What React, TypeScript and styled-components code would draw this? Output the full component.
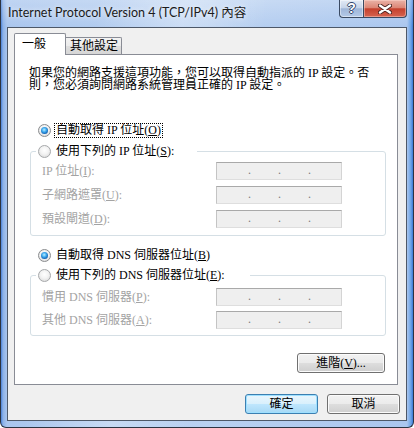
import React from 'react';
import styled, { createGlobalStyle, css } from 'styled-components';

const BODY_FONT = `"Liberation Serif", "Noto Sans CJK TC", serif`;

const GlobalStyle = createGlobalStyle`
  html, body { margin: 0; padding: 0; background: #ffffff; }
  #root { width: 414px; height: 428px; }
`;

const Window = styled.div`
  box-sizing: border-box;
  width: 414px;
  height: 428px;
  display: flex;
  flex-direction: column;
  padding: 0 6px 6px 6px;
  border: 1px solid #2c3442;
  border-top: none;
  border-radius: 0 0 6px 6px;
  background:
    linear-gradient(100deg, rgba(255,255,255,0) 20%, rgba(255,255,255,0.28) 38%, rgba(255,255,255,0) 55%),
    linear-gradient(180deg, rgba(255,255,255,0.25) 0px, rgba(255,255,255,0) 27px),
    linear-gradient(90deg, #4a82d8 0, #8db2e8 2px, #aac6ee 6px, #b9d1f1 50%, #aac6ee calc(100% - 6px), #6aa2e6 calc(100% - 2px), #3b78d6 100%);
`;

const TitleBar = styled.div`
  flex: none;
  height: 27px;
  display: flex;
  align-items: flex-start;
  justify-content: space-between;
`;

const Title = styled.div`
  margin: 5px 0 0 1px;
  font-family: Lato, "Noto Sans CJK TC", sans-serif;
  font-size: 12.5px;
  line-height: 16px;
  color: #1b1b1b;
  white-space: nowrap;
  text-shadow: 0 0 5px rgba(255, 255, 255, 0.9);
`;

const CaptionButtons = styled.div`
  display: flex;
`;

const CaptionButton = styled.div`
  box-sizing: border-box;
  height: 18px;
  display: flex;
  align-items: center;
  justify-content: center;
  border: 1px solid #3a4a62;
  border-top: none;
`;

const HelpButton = styled(CaptionButton)`
  width: 24px;
  border-right: none;
  border-radius: 0 0 0 4px;
  background: linear-gradient(180deg, #e2eaf5 0%, #c7d5ea 45%, #9fb6d8 52%, #b4c9e8 100%);
  box-shadow: inset 0 0 0 1px rgba(255, 255, 255, 0.45);
`;

const CloseButton = styled(CaptionButton)`
  width: 44px;
  border-radius: 0 0 4px 0;
  background: linear-gradient(180deg, #eab3a8 0%, #dc8676 45%, #c5402d 52%, #d66450 100%);
  box-shadow: inset 0 0 0 1px rgba(255, 220, 210, 0.45);
`;

const HelpGlyph = styled.span`
  font-family: "Liberation Sans", sans-serif;
  font-weight: bold;
  font-size: 14px;
  line-height: 14px;
  color: #ffffff;
  text-shadow: 1px 0 0 #34476a, -1px 0 0 #34476a, 0 1px 0 #34476a, 0 -1px 0 #34476a;
  margin-top: -1px;
`;

const Client = styled.div`
  flex: 1;
  min-height: 0;
  display: flex;
  flex-direction: column;
  border: 1px solid #4d5868;
  background: #f0f0f0;
`;

const TabStrip = styled.div`
  flex: none;
  display: flex;
  align-items: flex-end;
  padding: 5px 0 0 6px;
`;

const Tab = styled.div<{ $active?: boolean }>`
  box-sizing: border-box;
  font-family: ${BODY_FONT};
  font-size: 12px;
  line-height: 12px;
  color: #000;
  white-space: nowrap;
  border: 1px solid #898c95;
  border-bottom: none;
  ${(p) =>
    p.$active
      ? css`
          position: relative;
          z-index: 1;
          width: 52px;
          height: 22px;
          margin-bottom: -1px;
          padding: 4px 0 0 7px;
          background: #ffffff;
          border-radius: 2px 2px 0 0;
        `
      : css`
          width: 56px;
          height: 17px;
          padding: 2px 0 0 4px;
          border-left: none;
          background: linear-gradient(180deg, #f3f3f3 0%, #ebebeb 50%, #dedede 52%, #d6d6d6 100%);
          border-radius: 0 2px 0 0;
        `}
`;

const Panel = styled.div`
  flex: 1;
  min-height: 0;
  display: flex;
  flex-direction: column;
  margin: 0 8px 0 6px;
  padding: 12px 0 11px 0;
  border: 1px solid #898c95;
  background: #ffffff;
  font-family: ${BODY_FONT};
  font-size: 12px;
  color: #000;
`;

const Description = styled.p`
  margin: 0 0 0 14px;
  line-height: 12px;
  white-space: nowrap;
`;

const RadioRow = styled.div<{ $top?: number; $indent?: number }>`
  display: flex;
  align-items: center;
  height: 15px;
  margin-top: ${(p) => p.$top ?? 0}px;
  padding-left: ${(p) => p.$indent ?? 23}px;
`;

const RadioDot = styled.span<{ $checked?: boolean }>`
  box-sizing: border-box;
  flex: none;
  width: 13px;
  height: 13px;
  border-radius: 50%;
  border: 1px solid ${(p) => (p.$checked ? '#8a8c8e' : '#a6a8aa')};
  background: radial-gradient(circle at 50% 40%, #ffffff 0%, #f3f3f3 45%, #d4d4d4 100%);
  display: flex;
  align-items: center;
  justify-content: center;
  ${(p) =>
    p.$checked &&
    css`
      &::after {
        content: '';
        width: 7px;
        height: 7px;
        border-radius: 50%;
        background: radial-gradient(circle at 45% 40%, #bdefff 0%, #45b0f2 35%, #1266b8 70%, #0b3f7a 100%);
      }
    `}
`;

const RadioLabel = styled.span<{ $focused?: boolean }>`
  margin-left: 3px;
  padding: 0 1px;
  border: 1px dotted ${(p) => (p.$focused ? '#000' : 'transparent')};
  line-height: 13px;
  white-space: nowrap;
`;

const Group = styled.fieldset<{ $top?: number }>`
  margin: ${(p) => p.$top ?? 0}px 11px 0 15px;
  padding: 0 0 ${(p) => (p.$top && p.$top < 6 ? 6 : 7)}px 5px;
  min-width: 0;
  border: 1px solid #d5dfe5;
  border-radius: 3px;
`;

const GroupLegend = styled.legend<{ $width: number }>`
  box-sizing: border-box;
  width: ${(p) => p.$width}px;
  padding: 0;
  margin: 0;
`;

const GroupBody = styled.div<{ $pad: number; $gap: number }>`
  display: flex;
  flex-direction: column;
  gap: ${(p) => p.$gap}px;
  padding-top: ${(p) => p.$pad}px;
`;

const FieldRow = styled.div`
  display: grid;
  grid-template-columns: 174px 126px;
  align-items: center;
  height: 18px;
  padding-left: 6px;
`;

const FieldLabel = styled.span`
  color: #a3a3a3;
  line-height: 13px;
  white-space: nowrap;
`;

const IpBox = styled.div`
  box-sizing: border-box;
  width: 126px;
  height: 18px;
  display: flex;
  gap: 27px;
  padding-left: 31px;
  border: 1px solid #d4d4d4;
  border-top-color: #a9a9a9;
  border-left-color: #c4c4c4;
  border-bottom-color: #dedede;
  background: #efefef;
  font-family: "Liberation Serif", serif;
  font-size: 12px;
  line-height: 15px;
  color: #7c7c7c;
`;

const IpDot = styled.span`
  width: 3px;
`;

const Key = styled.u`
  text-underline-offset: 1px;
`;

const ButtonRow = styled.div<{ $top?: boolean }>`
  display: flex;
  justify-content: flex-end;
  gap: 9px;
  ${(p) =>
    p.$top
      ? css`
          margin-top: auto;
          padding-right: 12px;
        `
      : css`
          flex: none;
          padding: 9px 6px 6px 0;
        `}
`;

const PushButton = styled.button<{ $default?: boolean; $width: number }>`
  box-sizing: border-box;
  width: ${(p) => p.$width}px;
  height: 20px;
  padding: 0;
  margin: 0;
  font-family: ${BODY_FONT};
  font-size: 12px;
  line-height: 12px;
  color: #000;
  border-radius: 3px;
  border: 1px solid #707070;
  background: linear-gradient(180deg, #f2f2f2 0%, #ebebeb 48%, #dddddd 52%, #cfcfcf 100%);
  box-shadow: inset 0 0 0 1px #fbfbfb;
  ${(p) =>
    p.$default &&
    css`
      border-color: #3c7fb1;
      background: linear-gradient(180deg, #eaf6fd 0%, #d9f0fc 48%, #bee6fd 52%, #a7d9f5 100%);
      box-shadow: inset 0 0 0 1px #9ee0ff;
    `}
`;

function Radio({ checked, focused, children }: { checked?: boolean; focused?: boolean; children: React.ReactNode }) {
  return (
    <>
      <RadioDot $checked={checked} />
      <RadioLabel $focused={focused}>{children}</RadioLabel>
    </>
  );
}

function IpField() {
  return (
    <IpBox>
      <IpDot>.</IpDot>
      <IpDot>.</IpDot>
      <IpDot>.</IpDot>
    </IpBox>
  );
}

export default function App() {
  return (
    <>
      <GlobalStyle />
      <Window>
        <TitleBar>
          <Title>Internet Protocol Version 4 (TCP/IPv4) 內容</Title>
          <CaptionButtons>
            <HelpButton>
              <HelpGlyph>?</HelpGlyph>
            </HelpButton>
            <CloseButton>
              <svg width="14" height="10" viewBox="0 0 14 10">
                <path d="M2 1.5 L12 8.5 M12 1.5 L2 8.5" stroke="#4a2320" strokeWidth="4.2" strokeLinecap="round" />
                <path d="M2 1.5 L12 8.5 M12 1.5 L2 8.5" stroke="#ffffff" strokeWidth="2.4" strokeLinecap="round" />
              </svg>
            </CloseButton>
          </CaptionButtons>
        </TitleBar>
        <Client>
          <TabStrip>
            <Tab $active>一般</Tab>
            <Tab>其他設定</Tab>
          </TabStrip>
          <Panel>
            <Description>
              如果您的網路支援這項功能，您可以取得自動指派的 IP 設定。否
              <br />
              則，您必須詢問網路系統管理員正確的 IP 設定。
            </Description>

            <RadioRow $top={32}>
              <Radio checked focused>
                自動取得 IP 位址(<Key>O</Key>)
              </Radio>
            </RadioRow>

            <Group $top={6}>
              <GroupLegend $width={161}>
                <RadioRow $indent={2}>
                  <Radio>
                    使用下列的 IP 位址(<Key>S</Key>):
                  </Radio>
                </RadioRow>
              </GroupLegend>
              <GroupBody $pad={3} $gap={6}>
                <FieldRow>
                  <FieldLabel>
                    IP 位址(<Key>I</Key>):
                  </FieldLabel>
                  <IpField />
                </FieldRow>
                <FieldRow>
                  <FieldLabel>
                    子網路遮罩(<Key>U</Key>):
                  </FieldLabel>
                  <IpField />
                </FieldRow>
                <FieldRow>
                  <FieldLabel>
                    預設閘道(<Key>D</Key>):
                  </FieldLabel>
                  <IpField />
                </FieldRow>
              </GroupBody>
            </Group>

            <RadioRow $top={12}>
              <Radio checked>
                自動取得 DNS 伺服器位址(<Key>B</Key>)
              </Radio>
            </RadioRow>

            <Group $top={5}>
              <GroupLegend $width={214}>
                <RadioRow $indent={2}>
                  <Radio>
                    使用下列的 DNS 伺服器位址(<Key>E</Key>):
                  </Radio>
                </RadioRow>
              </GroupLegend>
              <GroupBody $pad={5} $gap={5}>
                <FieldRow>
                  <FieldLabel>
                    慣用 DNS 伺服器(<Key>P</Key>):
                  </FieldLabel>
                  <IpField />
                </FieldRow>
                <FieldRow>
                  <FieldLabel>
                    其他 DNS 伺服器(<Key>A</Key>):
                  </FieldLabel>
                  <IpField />
                </FieldRow>
              </GroupBody>
            </Group>

            <ButtonRow $top>
              <PushButton $width={88}>
                進階(<Key>V</Key>)...
              </PushButton>
            </ButtonRow>
          </Panel>
          <ButtonRow>
            <PushButton $default $width={73}>
              確定
            </PushButton>
            <PushButton $width={73}>取消</PushButton>
          </ButtonRow>
        </Client>
      </Window>
    </>
  );
}
